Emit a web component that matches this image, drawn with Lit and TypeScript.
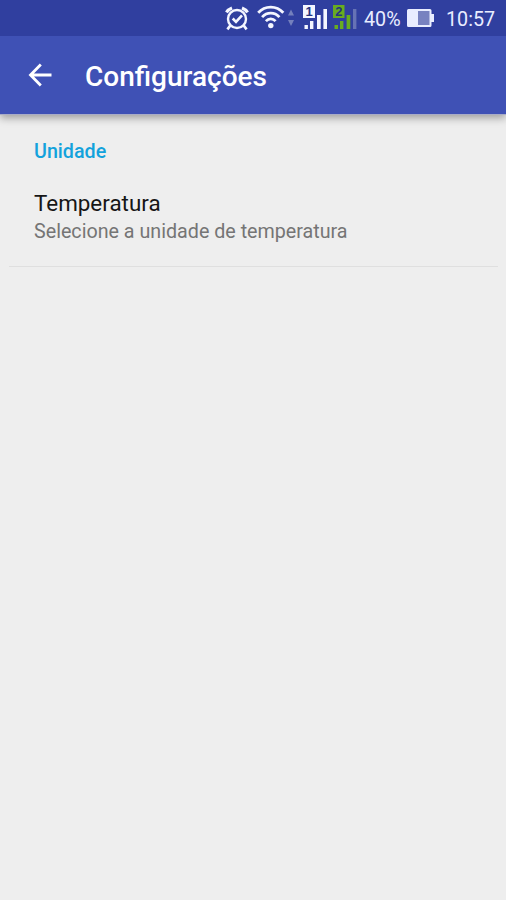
import { LitElement, html, css } from "lit";
import { customElement } from "lit/decorators.js";

@customElement("status-bar")
class StatusBar extends LitElement {
  static styles = css`
    :host {
      display: flex;
      align-items: center;
      justify-content: flex-end;
      flex: none;
      height: 36px;
      box-sizing: border-box;
      padding-right: 10px;
      background: #303f9f;
      color: #e9edff;
      font: 400 19.7px/36px Roboto, sans-serif;
      white-space: nowrap;
    }
    svg { display: block; flex: none; }
    .percent { width: 37px; margin: 3px 6px 0 7px; }
    .battery { margin-right: 11px; }
    .clock { width: 50px; margin-top: 3px; }
    .badge { font: 700 13px "Liberation Sans", sans-serif; fill: #26347f; }
  `;

  render() {
    return html`
      <svg width="32" height="36" viewBox="0 0 32 36" fill="none" stroke="#f4f6ff" stroke-width="2.4">
        <circle cx="12" cy="19" r="9" />
        <path d="M1.4 12.4A12 12 0 0 1 7 8M17 8a12 12 0 0 1 5.6 4.4" stroke-width="3.2" />
        <path d="M5.4 25.4 2.4 29.4M18.6 25.4 21.6 29.4M7.7 18.5l3.3 3.3 6-6.5" stroke-width="2.6" />
      </svg>
      <svg width="31" height="36" viewBox="0 0 31 36" fill="none" stroke="#f4f6ff" stroke-width="2.8">
        <path d="M1.2 12.8C8 5.2 19.5 5.2 26.3 12.8M5.1 17.1c4.8-5.2 12.5-5.2 17.3 0M8.9 21.1c2.8-2.9 6.9-2.9 9.7 0" />
        <circle cx="13.8" cy="25.6" r="2.7" fill="#f4f6ff" stroke="none" />
      </svg>
      <svg width="15" height="36" viewBox="0 0 15 36" fill="#7480bd">
        <path d="M0 15.5 3 9.5 6 15.5ZM0 20h6l-3 6Z" />
      </svg>
      <svg width="30" height="36" viewBox="0 0 30 36" fill="#f4f6ff">
        <path d="M0 5h12v13H0ZM1.5 25h3.4v4H1.5ZM7 21h3.4v8H7ZM14 15h3.7v14H14ZM20.4 9H24v20h-3.6Z" />
        <text class="badge" x="2.6" y="16">1</text>
      </svg>
      <svg width="24" height="36" viewBox="0 0 24 36" fill="#68ac20">
        <path d="M0 5h11.5v13H0ZM1.5 25H5v4H1.5ZM7 21h3.4v8H7ZM13.6 15h3.7v14h-3.7Z" />
        <path d="M20 9h3.4v20H20Z" fill="#6673b5" />
        <text class="badge" x="2.2" y="16">2</text>
      </svg>
      <span class="percent">40%</span>
      <svg class="battery" width="28" height="36" viewBox="0 0 28 36">
        <path d="M1.5 9h21.5q1.5 0 1.5 1.5V14H27v8h-2.5v3.5q0 1.5-1.5 1.5H1.5Q0 27 0 25.5v-15Q0 9 1.5 9Z" fill="#e9edff" />
        <path d="M11 11h11.5v14H11Z" fill="#7882c0" />
      </svg>
      <span class="clock">10:57</span>
    `;
  }
}

@customElement("app-root")
class AppRoot extends LitElement {
  static styles = css`
    :host {
      display: flex;
      flex-direction: column;
      height: 900px;
      background: #eeeeee;
      font-family: Roboto, sans-serif;
      overflow: hidden;
    }
    status-bar { position: relative; z-index: 1; }
    .toolbar {
      display: flex;
      align-items: center;
      flex: none;
      height: 78px;
      box-sizing: border-box;
      padding-left: 28px;
      background: #3f51b5;
      color: #fff;
      box-shadow: 0 1px 0 #a9acc6, 0 4px 8px rgba(0, 0, 0, 0.34);
    }
    .back { display: block; margin-right: 33px; }
    h1 { margin: 3px 0 0; font-size: 28px; line-height: 34px; font-weight: 500; }
    main { padding: 24px 8px 0 9px; }
    h2 { margin: 0 25px; font-size: 19.7px; line-height: 28px; font-weight: 500; color: #13a2dc; }
    .item { padding: 23px 25px 20px; border-bottom: 1px solid #dfdfdf; }
    .name { font-size: 22.4px; line-height: 28px; color: #161616; }
    .summary { margin-top: 1px; font-size: 19.7px; line-height: 28px; color: #757575; }
  `;

  render() {
    return html`
      <status-bar></status-bar>
      <header class="toolbar">
        <svg class="back" width="24" height="24" viewBox="0 0 24 24" fill="none" stroke="#fff" stroke-width="2.8">
          <path d="M12.8 1.5 2.5 12l10.3 10.5M2.8 12H23.5" />
        </svg>
        <h1>Configurações</h1>
      </header>
      <main>
        <h2>Unidade</h2>
        <div class="item">
          <div class="name">Temperatura</div>
          <div class="summary">Selecione a unidade de temperatura</div>
        </div>
      </main>
    `;
  }
}
